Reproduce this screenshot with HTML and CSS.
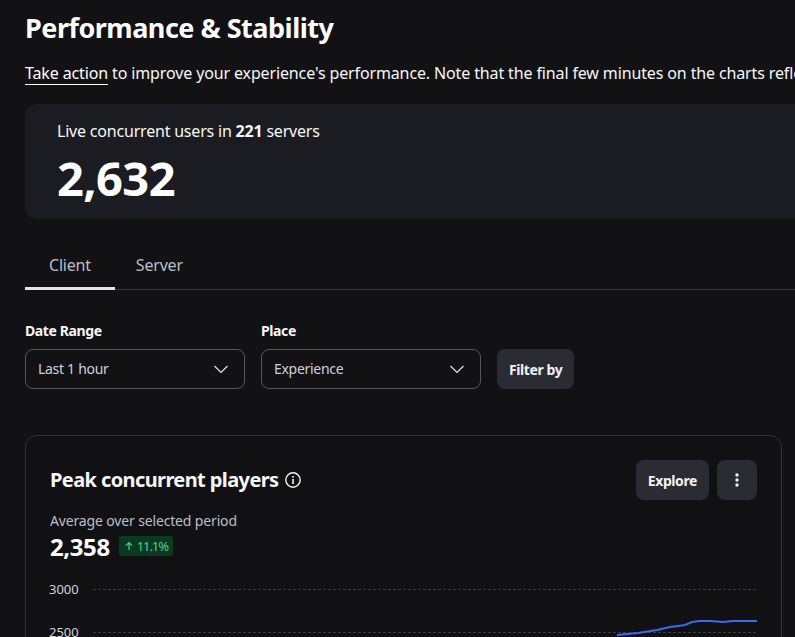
FILE: index.html
```html
<!DOCTYPE html>
<html lang="en">
<head>
  <meta charset="UTF-8">
  <meta name="viewport" content="width=device-width, initial-scale=1.0">
  <title>Performance &amp; Stability</title>
  <link rel="stylesheet" href="styles.css">
</head>
<body>
  <div class="page">
    <h1 class="title">Performance &amp; Stability</h1>
    <p class="intro"><a class="intro-link" href="#">Take action</a> to improve your experience's performance. Note that the final few minutes on the charts reflect data that is still being processed.</p>

    <div class="live-banner">
      <div class="live-label">Live concurrent users in <strong>221</strong> servers</div>
      <div class="live-count">2,632</div>
    </div>

    <div class="tabs">
      <div class="tab active">Client</div>
      <div class="tab">Server</div>
    </div>

    <div class="filters">
      <div class="field">
        <label class="field-label">Date Range</label>
        <div class="select">
          <span class="select-value">Last 1 hour</span>
          <svg class="chevron" width="16" height="16" viewBox="0 0 16 16"><path d="M.5 5L7 11.500 13.500 5" fill="none" stroke="#e4e4e8" stroke-width="1.200"/></svg>
        </div>
      </div>
      <div class="field">
        <label class="field-label">Place</label>
        <div class="select">
          <span class="select-value">Experience</span>
          <svg class="chevron" width="16" height="16" viewBox="0 0 16 16"><path d="M.5 5L7 11.500 13.500 5" fill="none" stroke="#e4e4e8" stroke-width="1.200"/></svg>
        </div>
      </div>
      <button class="btn filter-btn">Filter by</button>
    </div>

    <div class="chart-card">
      <div class="chart-head">
        <div class="chart-title">
          Peak concurrent players
          <svg width="18" height="18" viewBox="0 0 18 18"><circle cx="9" cy="9" r="7.200" fill="none" stroke="#f2f2f4" stroke-width="1.400"/><rect x="8.200" y="8" width="1.600" height="5" fill="#f2f2f4"/><rect x="8.200" y="5" width="1.600" height="1.700" fill="#f2f2f4"/></svg>
        </div>
        <div class="chart-actions">
          <button class="btn explore-btn">Explore</button>
          <button class="btn kebab">
            <svg width="4" height="14" viewBox="0 0 4 14"><circle cx="2" cy="2" r="1.700" fill="#f2f2f4"/><circle cx="2" cy="7" r="1.700" fill="#f2f2f4"/><circle cx="2" cy="12" r="1.700" fill="#f2f2f4"/></svg>
          </button>
        </div>
      </div>

      <div class="avg-label">Average over selected period</div>
      <div class="avg-row">
        <span class="avg-value">2,358</span>
        <span class="trend">
          <svg width="10" height="10" viewBox="0 0 10 10"><path d="M5 9V2M2 4.600L5 1.600l3 3" fill="none" stroke="#4fd08a" stroke-width="1.200"/></svg>
          11.1%
        </span>
      </div>

      <div class="chart">
        <div class="y-labels">
          <span>3000</span>
          <span>2500</span>
        </div>
        <svg class="plot" width="664" height="64" viewBox="0 0 664 64">
          <line x1="0" y1="10.500" x2="664" y2="10.500" stroke="#3a3a42" stroke-dasharray="3 2"/>
          <line x1="0" y1="53.500" x2="664" y2="53.500" stroke="#3a3a42" stroke-dasharray="3 2"/>
          <path d="M524 56L545 54L564 51L577 48L585 47L592 46L599 43L606 42L618 42L630 43L640 42L664 42" fill="none" stroke="#3a6cf0" stroke-width="2"/>
        </svg>
      </div>
    </div>
  </div>
</body>
</html>
```

FILE: styles.css
```css
body {
  margin: 0;
  background: #121215;
  color: #f7f7f8;
  font-family: "Noto Sans", Inter, sans-serif;
  overflow: hidden;
  height: 637px;
}

.page {
  width: 900px;
  padding-left: 25px;
}

.title {
  margin: 0;
  padding-top: 11px;
  font-size: 27px;
  line-height: 34px;
  font-weight: 700;
  letter-spacing: -0.5px;
  color: #fff;
}

.intro {
  margin: 16px 0 0;
  font-size: 16px;
  line-height: 24px;
  letter-spacing: -0.13px;
  white-space: nowrap;
}

.intro-link {
  color: #fff;
  text-decoration: none;
  border-bottom: 1px solid #fff;
}

.live-banner {
  margin-top: 19px;
  height: 115px;
  box-sizing: border-box;
  padding: 16px 32px;
  background: #1b1c21;
  border-radius: 12px;
}

.live-label {
  font-size: 16px;
  line-height: 22px;
  letter-spacing: -0.2px;
}

.live-count {
  margin-top: 8px;
  font-size: 47px;
  line-height: 56px;
  font-weight: 700;
  letter-spacing: -0.6px;
  color: #fff;
}

.tabs {
  display: flex;
  margin-top: 24px;
  height: 46px;
  border-bottom: 1px solid #38383f;
}

.tab {
  padding: 0 24px;
  line-height: 44px;
  font-size: 16px;
  letter-spacing: -0.2px;
  color: #bcbec8;
  height: 44px;
}

.tab:last-child {
  padding: 0 21px;
}

.tab.active {
  border-bottom: 3px solid #e4e4e8;
}

.filters {
  display: flex;
  align-items: flex-end;
  gap: 16px;
  margin-top: 30px;
}

.field-label {
  display: block;
  margin-bottom: 7px;
  font-size: 14px;
  line-height: 22px;
  font-weight: 700;
  letter-spacing: -0.4px;
}

.select {
  display: flex;
  align-items: center;
  justify-content: space-between;
  box-sizing: border-box;
  width: 220px;
  height: 40px;
  padding: 0 14px 0 12px;
  border: 1px solid #56565f;
  border-radius: 8px;
  font-size: 14px;
  letter-spacing: -0.3px;
  color: #d0d1d8;
}

.select-value {
  padding-bottom: 2px;
}

.btn {
  height: 40px;
  padding: 0 12px;
  border: none;
  border-radius: 8px;
  background: #2a2b33;
  color: #f2f2f4;
  font-family: inherit;
  font-size: 14px;
  font-weight: 700;
  letter-spacing: -0.4px;
}

.chart-card {
  box-sizing: border-box;
  width: 757px;
  height: 260px;
  margin-top: 46px;
  padding: 24px 24px 0;
  background: #111114;
  border: 1px solid #303036;
  border-radius: 12px;
}

.chart-head {
  display: flex;
  align-items: center;
  justify-content: space-between;
}

.chart-title {
  display: flex;
  align-items: center;
  gap: 5px;
  margin-top: -1px;
  font-size: 20px;
  font-weight: 700;
  letter-spacing: -0.6px;
}

.chart-actions {
  display: flex;
  gap: 8px;
}

.kebab {
  display: flex;
  align-items: center;
  justify-content: center;
  width: 40px;
  padding: 0;
}

.avg-label {
  margin-top: 10px;
  font-size: 14px;
  line-height: 22px;
  letter-spacing: -0.15px;
  color: #bcbec8;
}

.avg-row {
  display: flex;
  align-items: center;
  gap: 9px;
  margin-top: 1px;
}

.avg-value {
  font-size: 24px;
  line-height: 28px;
  font-weight: 700;
  letter-spacing: -0.4px;
  color: #fff;
}

.trend {
  display: flex;
  align-items: center;
  gap: 3px;
  height: 20px;
  margin-bottom: 2px;
  padding: 0 5px;
  border-radius: 3px;
  background: #0b3a22;
  color: #4fd08a;
  font-size: 13px;
  letter-spacing: -1.1px;
}

.chart {
  display: flex;
  margin-top: 18px;
  margin-left: -1px;
}

.y-labels {
  display: flex;
  flex-direction: column;
  gap: 23px;
  width: 44px;
  font-size: 13px;
  line-height: 20px;
  color: #d0d1d8;
}
```
